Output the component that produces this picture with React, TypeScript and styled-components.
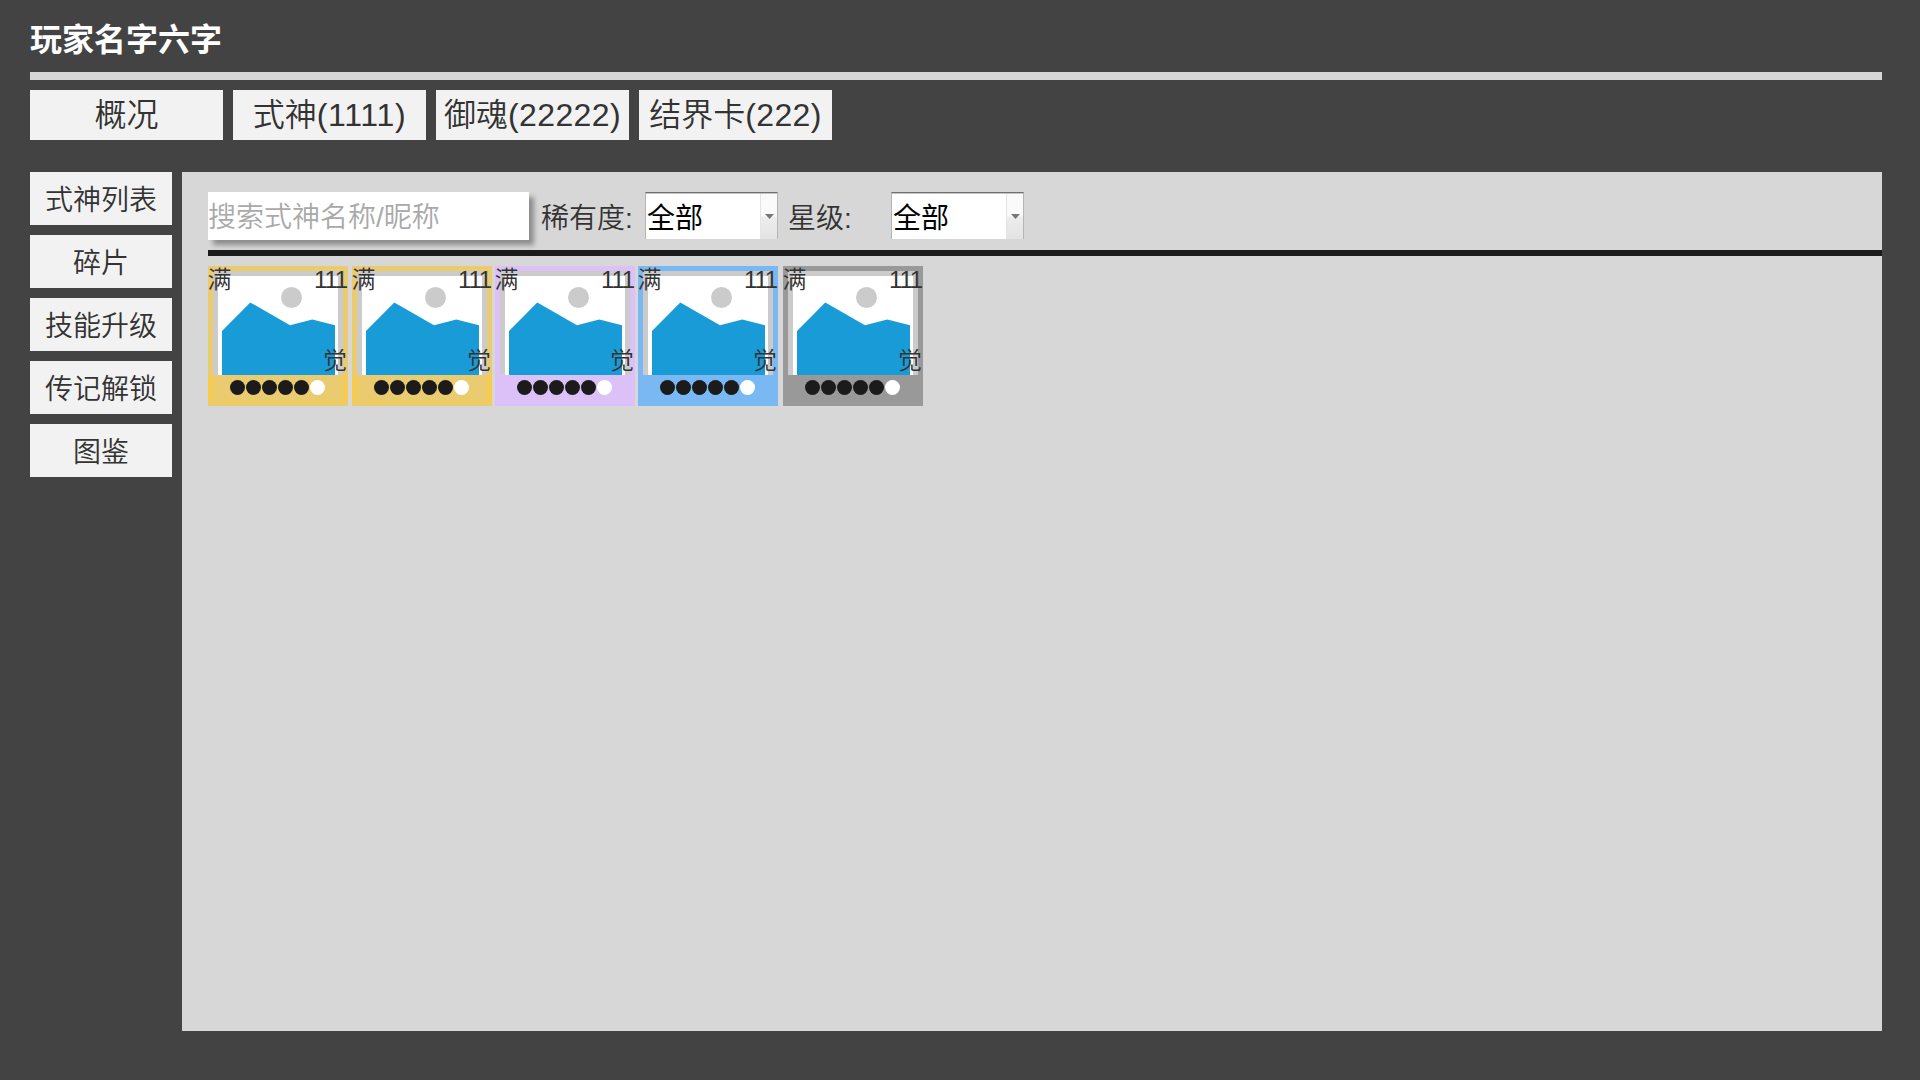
import React from "react";
import styled, { createGlobalStyle } from "styled-components";

const GlobalStyle = createGlobalStyle`
  * { box-sizing: border-box; }
  body {
    margin: 0;
    background: #434343;
    color: #333333;
    font-family: "Liberation Sans", "Noto Sans CJK SC", sans-serif;
    font-weight: 350;
  }
`;

const Page = styled.div`
  height: 1080px;
  padding: 0 38px 49px 30px;
  display: flex;
  flex-direction: column;
`;

const Header = styled.header`
  height: 80px;
  flex: none;
  border-bottom: 8px solid #d7d7d7;
`;

const PlayerName = styled.h1`
  margin: 0;
  padding-top: 22px;
  font-size: 32px;
  line-height: 37px;
  font-weight: 700;
  color: #ffffff;
`;

const Tabs = styled.nav`
  display: flex;
  gap: 10px;
  margin: 10px 0 32px;
`;

const Tab = styled.div`
  width: 193px;
  height: 50px;
  background: #f2f2f2;
  font-size: 32px;
  line-height: 50px;
  text-align: center;
  white-space: nowrap;
`;

const Count = styled.span<{ $spacing: number }>`
  letter-spacing: ${(p) => p.$spacing}px;
`;

const Body = styled.div`
  flex: 1;
  display: flex;
  gap: 10px;
`;

const Sidebar = styled.nav`
  width: 142px;
  flex: none;
  display: flex;
  flex-direction: column;
  gap: 10px;
`;

const SideItem = styled.div`
  height: 53px;
  background: #f2f2f2;
  font-size: 28px;
  line-height: 57px;
  text-align: center;
`;

const Panel = styled.main`
  flex: 1;
  background: #d7d7d7;
  padding: 20px 0 0 26px;
`;

const Toolbar = styled.div`
  height: 64px;
  display: flex;
  align-items: flex-start;
  border-bottom: 6px solid #1b1b1b;
`;

const Search = styled.input`
  width: 321px;
  height: 48px;
  margin: 0 12px 0 0;
  padding: 4px 0 0;
  border: 0;
  outline: 0;
  background: #ffffff;
  box-shadow: 5px 5px 5px rgba(0, 0, 0, 0.35);
  font: 350 28px "Liberation Sans", "Noto Sans CJK SC", sans-serif;
  &::placeholder { color: #a9a9a9; opacity: 1; }
`;

const FilterLabel = styled.span<{ $width: number }>`
  width: ${(p) => p.$width}px;
  font-size: 28px;
  line-height: 54px;
`;

const SelectBox = styled.div`
  width: 133px;
  height: 47px;
  margin-right: 10px;
  display: flex;
  background: #ffffff;
  border: 1px solid #b5b5b5;
  border-top-color: #707070;
  border-bottom: 0;
  box-shadow: inset 0 1px 0 #c4c4c4;
`;

const SelectValue = styled.span`
  flex: 1;
  padding-left: 1px;
  color: #000000;
  font-size: 28px;
  font-weight: 400;
  line-height: 52px;
`;

const SelectArrow = styled.span`
  width: 17px;
  margin-top: 1px;
  display: flex;
  align-items: center;
  justify-content: center;
  border-left: 1px solid #e4e4e4;
  background: linear-gradient(#fafafa 0 48%, #ededed 52%, #e3e3e3);
`;

const Grid = styled.div`
  display: flex;
  padding-top: 10px;
`;

const CardFrame = styled.article<{ $color: string; $gap: number }>`
  position: relative;
  width: 140px;
  height: 140px;
  margin-right: ${(p) => p.$gap}px;
  background: ${(p) => p.$color};
`;

const Portrait = styled.svg`
  display: block;
  width: 140px;
  height: 109px;
`;

const Stars = styled.div<{ $edge: string }>`
  height: 31px;
  display: flex;
  justify-content: center;
  gap: 1px;
  padding: 4.5px 0.5px 0 0;
  background:
    linear-gradient(${(p) => p.$edge}, ${(p) => p.$edge}) 0 0 / 5px 27px no-repeat,
    linear-gradient(${(p) => p.$edge}, ${(p) => p.$edge}) 100% 0 / 5px 27px no-repeat,
    linear-gradient(${(p) => p.$edge}, ${(p) => p.$edge}) 0 26px / 100% 1px no-repeat;
`;

const Star = styled.span<{ $on: boolean }>`
  width: 15px;
  height: 15px;
  border-radius: 50%;
  background: ${(p) => (p.$on ? "#1b1b1b" : "#ffffff")};
`;

const Badge = styled.span<{ $place: "level" | "count" | "awake" }>`
  position: absolute;
  font-size: 24px;
  line-height: 27px;
  ${(p) =>
    p.$place === "level"
      ? "left: -0.5px; top: 0;"
      : p.$place === "count"
      ? "right: 1px; top: 0; letter-spacing: -1.2px;"
      : "right: 1px; top: 81px;"}
`;

const tabs = [
  { label: "概况", count: "", spacing: 0 },
  { label: "式神", count: "(1111)", spacing: 0.7 },
  { label: "御魂", count: "(22222)", spacing: 0.4 },
  { label: "结界卡", count: "(222)", spacing: 0.4 },
];
const sections = ["式神列表", "碎片", "技能升级", "传记解锁", "图鉴"];
const cards = [
  { color: "#eacb70", edge: "#f7cb4d", gap: 4 },
  { color: "#eacb70", edge: "#f7cb4d", gap: 3 },
  { color: "#dcc1f9", edge: "#dcc1f9", gap: 3 },
  { color: "#7ab8f3", edge: "#7ab8f3", gap: 5 },
  { color: "#999999", edge: "#999999", gap: 0 },
];

function Select() {
  return (
    <SelectBox>
      <SelectValue>全部</SelectValue>
      <SelectArrow>
        <svg width="9" height="5" viewBox="0 0 9 5">
          <path d="M0 0h9L4.5 5z" fill="#777777" />
        </svg>
      </SelectArrow>
    </SelectBox>
  );
}

function Card({ color, edge, gap }: { color: string; edge: string; gap: number }) {
  return (
    <CardFrame $color={color} $gap={gap}>
      <Portrait viewBox="0 0 140 109">
        <rect x="5" y="5" width="130" height="104" fill="#cbcbcb" />
        <rect x="10" y="10" width="120" height="99" fill="#ffffff" />
        <circle cx="83.5" cy="31.5" r="10.5" fill="#cbcbcb" />
        <path d="M14 65L42.3 36.5L82 59.3L104.3 53.6L127 59.3V109H14z" fill="#199bd7" />
      </Portrait>
      <Stars $edge={edge}>
        {[1, 2, 3, 4, 5, 6].map((n) => (
          <Star key={n} $on={n < 6} />
        ))}
      </Stars>
      <Badge $place="level">满</Badge>
      <Badge $place="count">111</Badge>
      <Badge $place="awake">觉</Badge>
    </CardFrame>
  );
}

export default function App() {
  return (
    <>
      <GlobalStyle />
      <Page>
        <Header>
          <PlayerName>玩家名字六字</PlayerName>
        </Header>
        <Tabs>
          {tabs.map((t) => (
            <Tab key={t.label}>
              {t.label}
              {t.count && <Count $spacing={t.spacing}>{t.count}</Count>}
            </Tab>
          ))}
        </Tabs>
        <Body>
          <Sidebar>
            {sections.map((s) => (
              <SideItem key={s}>{s}</SideItem>
            ))}
          </Sidebar>
          <Panel>
            <Toolbar>
              <Search placeholder="搜索式神名称/昵称" />
              <FilterLabel $width={104}>稀有度:</FilterLabel>
              <Select />
              <FilterLabel $width={103}>星级:</FilterLabel>
              <Select />
            </Toolbar>
            <Grid>
              {cards.map((c, i) => (
                <Card key={i} {...c} />
              ))}
            </Grid>
          </Panel>
        </Body>
      </Page>
    </>
  );
}
